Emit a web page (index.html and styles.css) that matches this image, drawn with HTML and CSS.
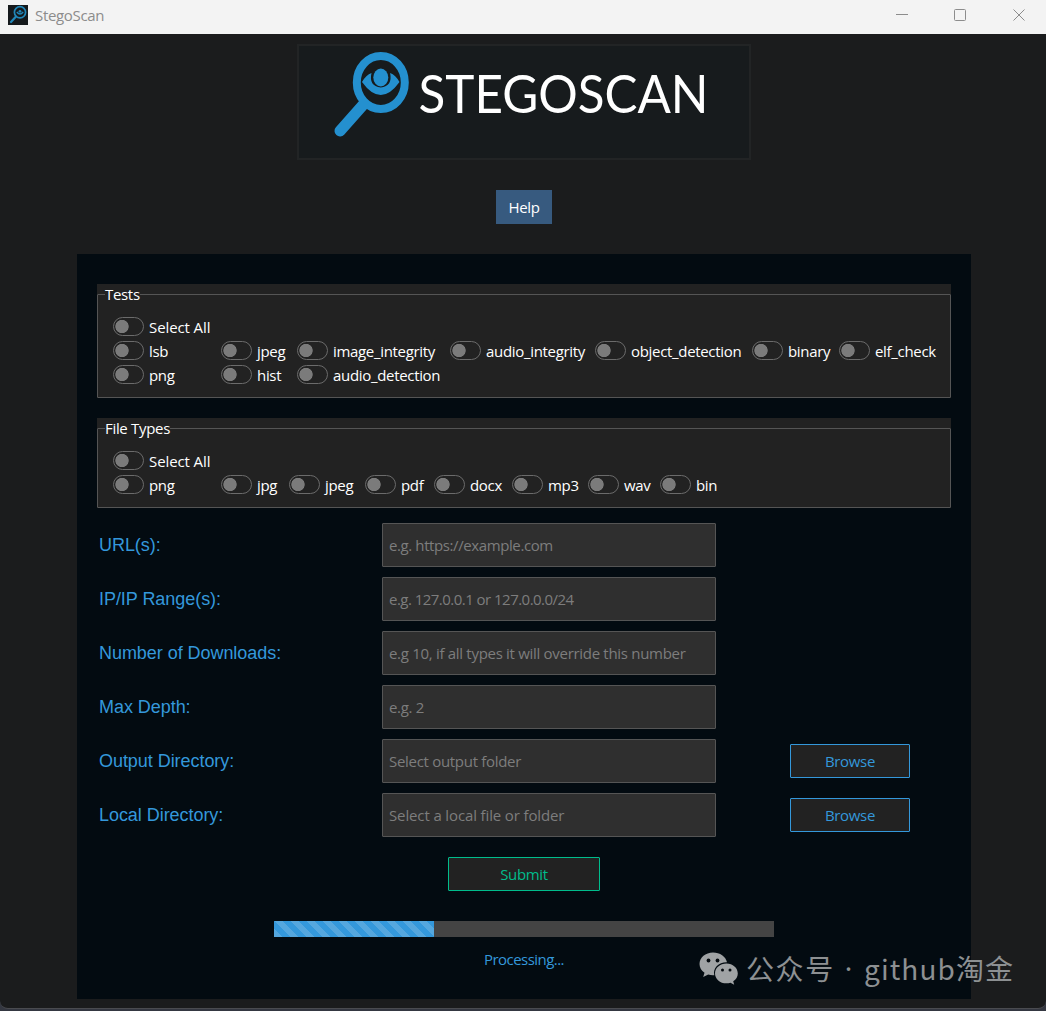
FILE: index.html
```html
<!DOCTYPE html>
<html lang="en">
<head>
    <meta charset="UTF-8">
    <meta name="viewport" content="width=device-width, initial-scale=1.0">
    <title>StegoScan</title>
    <link rel="stylesheet" href="styles.css">
</head>
<body>
    <div class="window">
        <header class="titlebar">
            <svg class="app-icon" width="20" height="20" viewBox="0 0 20 20">
                <rect width="20" height="20" fill="#15191c"/>
                <g fill="none" stroke="#2187b9">
                    <circle cx="12" cy="7.3" r="5.6" stroke-width="1.7"/>
                    <path d="M8 11.5 3 17" stroke-width="2.2" stroke-linecap="round"/>
                    <path d="M8.8 7q3.2 4 6.4 0" stroke-width="1.3"/>
                </g>
                <circle cx="12" cy="6.3" r="1.4" fill="#2187b9"/>
            </svg>
            <span class="app-name">StegoScan</span>
            <svg class="controls" width="130" height="14" viewBox="0 0 130 14" fill="none" stroke="#8c8c8c">
                <path d="M0 6.500h12"/>
                <rect x="58.500" y="1.500" width="11" height="11" rx="1"/>
                <path d="m117.500 1.500 11 11m0-11-11 11"/>
            </svg>
        </header>

        <main>
            <div class="logo">
                <svg width="450" height="112" viewBox="299 46 450 112">
                    <ellipse cx="380.800" cy="82.500" rx="24" ry="26.500" fill="none" stroke="#2490cf" stroke-width="8"/>
                    <path d="m363 105-23 26" stroke="#2490cf" stroke-width="11" stroke-linecap="round"/>
                    <path d="M362 82q4-7 9.500-9-3 13 9.300 14.500 12-1.500 9.300-14.500 5.500 2 9.400 9-18.700 26-37.500 0z" fill="#2490cf"/>
                    <ellipse cx="380.800" cy="77.500" rx="7.500" ry="9" fill="#2490cf"/>
                    <text class="logo-text" x="418.500" y="112.500" textLength="290" lengthAdjust="spacingAndGlyphs">STEGOSCAN</text>
                </svg>
            </div>

            <button class="help">Help</button>

            <div class="panel">
                <div class="frame">
                    <fieldset>
                        <legend>Tests</legend>
                        <div class="options tests">
                            <label class="toggle all"><i></i><span>Select All</span></label>
                            <label class="toggle"><i></i><span>lsb</span></label>
                            <label class="toggle"><i></i><span>jpeg</span></label>
                            <label class="toggle"><i></i><span>image_integrity</span></label>
                            <label class="toggle"><i></i><span>audio_integrity</span></label>
                            <label class="toggle"><i></i><span>object_detection</span></label>
                            <label class="toggle"><i></i><span>binary</span></label>
                            <label class="toggle"><i></i><span>elf_check</span></label>
                            <label class="toggle"><i></i><span>png</span></label>
                            <label class="toggle"><i></i><span>hist</span></label>
                            <label class="toggle"><i></i><span>audio_detection</span></label>
                        </div>
                    </fieldset>
                </div>

                <div class="frame">
                    <fieldset>
                        <legend>File Types</legend>
                        <div class="options types">
                            <label class="toggle all"><i></i><span>Select All</span></label>
                            <label class="toggle"><i></i><span>png</span></label>
                            <label class="toggle"><i></i><span>jpg</span></label>
                            <label class="toggle"><i></i><span>jpeg</span></label>
                            <label class="toggle"><i></i><span>pdf</span></label>
                            <label class="toggle"><i></i><span>docx</span></label>
                            <label class="toggle"><i></i><span>mp3</span></label>
                            <label class="toggle"><i></i><span>wav</span></label>
                            <label class="toggle"><i></i><span>bin</span></label>
                        </div>
                    </fieldset>
                </div>

                <form class="form">
                    <div class="row">
                        <label for="url">URL(s):</label>
                        <input type="text" id="url" class="url" placeholder="e.g. https://example.com">
                    </div>
                    <div class="row">
                        <label for="ip">IP/IP Range(s):</label>
                        <input type="text" id="ip" class="ip" placeholder="e.g. 127.0.0.1 or 127.0.0.0/24">
                    </div>
                    <div class="row">
                        <label for="downloads">Number of Downloads:</label>
                        <input type="text" id="downloads" placeholder="e.g 10, if all types it will override this number">
                    </div>
                    <div class="row">
                        <label for="depth">Max Depth:</label>
                        <input type="text" id="depth" placeholder="e.g. 2">
                    </div>
                    <div class="row">
                        <label for="output">Output Directory:</label>
                        <input type="text" id="output" placeholder="Select output folder">
                        <button type="button" class="browse">Browse</button>
                    </div>
                    <div class="row">
                        <label for="local">Local Directory:</label>
                        <input type="text" id="local" class="local" placeholder="Select a local file or folder">
                        <button type="button" class="browse">Browse</button>
                    </div>
                    <button type="button" class="submit">Submit</button>
                </form>

                <div class="progress"><div class="bar" style="width: 32%"></div></div>
                <div class="status">Processing...</div>
            </div>
        </main>
    </div>

    <div class="watermark">
        <svg width="40" height="33" viewBox="0 0 40 33">
            <path fill="#a0a3a5" d="M14 .5C6.500.5.500 5.500.500 12c0 3.600 1.900 6.700 5 8.800L4.200 25l5-2.500c1.500.4 3 .7 4.800.7h1.300C13.500 16 20 10 28 10.300 26.800 4.500 21 .5 14 .5z"/>
            <path fill="#a0a3a5" d="M27.500 11.500c-6.500 0-11.500 4.400-11.500 9.900s5 9.900 11.500 9.900c1.300 0 2.700-.2 4-.6l3.700 2-1-3.400c2.900-1.900 4.600-4.700 4.600-7.900 0-5.500-5-9.900-11.300-9.900z"/>
            <g fill="#050b10">
                <circle cx="9.500" cy="8.500" r="1.900"/>
                <circle cx="18.500" cy="8.500" r="1.900"/>
                <circle cx="23.500" cy="18" r="1.500"/>
                <circle cx="31" cy="18" r="1.500"/>
            </g>
        </svg>
        <span class="wm-label">公众号</span>
        <span class="wm-dot">·</span>
        <span class="wm-name">github淘金</span>
    </div>
</body>
</html>
```
FILE: styles.css
```css
body {
    margin: 0;
    height: 1011px;
    overflow: hidden;
    background-color: #343741;
    font-family: "Open Sans", "Noto Sans", sans-serif;
    font-size: 15px;
    letter-spacing: -0.32px;
    color: #ffffff;
}
.window {
    height: 1009px;
    box-sizing: border-box;
    background-color: #1b1c1d;
    border-bottom: 1px solid #4a4b50;
    border-radius: 0 0 8px 8px;
    overflow: hidden;
}
.titlebar {
    display: flex;
    align-items: center;
    height: 34px;
    box-sizing: border-box;
    padding: 0 20px 4px 8px;
    background-color: #f3f3f3;
    color: #8c8c8c;
}
.app-name {
    margin-left: 7px;
}
.controls {
    margin-left: auto;
}
main {
    display: flex;
    flex-direction: column;
    align-items: center;
    padding: 10px 0 0 2px;
}
.logo {
    width: 450px;
    height: 112px;
    border: 2px solid #222425;
    background-color: #171b1d;
    margin-right: 1px;
}
.logo svg {
    display: block;
}
.logo-text {
    font-family: Lato, sans-serif;
    font-size: 52px;
    letter-spacing: 0;
    fill: #ffffff;
}
button {
    padding: 0;
    font-family: inherit;
    font-size: 15px;
    letter-spacing: -0.32px;
    line-height: 20px;
    height: 34px;
    border-radius: 1px;
    box-sizing: border-box;
    background-color: #222222;
}
.help {
    width: 56px;
    margin: 30px 0;
    border: none;
    border-radius: 0;
    background-color: #375a7f;
    color: #ffffff;
}
.panel {
    width: 894px;
    height: 745px;
    box-sizing: border-box;
    padding: 30px 20px 0;
    background-color: #030b11;
}
.frame {
    margin-bottom: 20px;
    background-color: #222222;
}
fieldset {
    margin: 0;
    padding: 11px 7px 10px 7px;
    border: 1px solid #555555;
    border-radius: 1px;
}
legend {
    padding: 0;
    height: 20px;
    line-height: 21px;
}
.options {
    display: grid;
    grid-auto-rows: 24px;
    padding-left: 8px;
}
.tests {
    grid-template-columns: 108px 76px 153px 145px 157px 87px 97px;
}
.types {
    grid-template-columns: 108px 68px 76px 69px 78px 76px 72px 60px;
}
.toggle {
    display: flex;
    align-items: center;
    white-space: nowrap;
}
.toggle.all {
    grid-column: 1 / -1;
    letter-spacing: -0.1px;
}
.toggle i {
    width: 31px;
    height: 19px;
    margin: 0 5px 1px 0;
    box-sizing: border-box;
    border: 1px solid #6b6b6b;
    border-radius: 10px;
    background: radial-gradient(circle at 8px 8.5px, #7b7b7b 6.3px, transparent 7px);
}
.toggle span {
    line-height: 24px;
    padding-bottom: 1px;
}
.form {
    display: flex;
    flex-direction: column;
    gap: 10px;
    margin-top: -5px;
}
.row {
    display: grid;
    grid-template-columns: 283px 334px 120px;
    align-items: center;
    padding-left: 2px;
    height: 44px;
}
.row label {
    font-family: "Liberation Sans", Arial, sans-serif;
    font-size: 18px;
    letter-spacing: -0.05px;
    color: #3498db;
}
input {
    width: 334px;
    height: 44px;
    padding: 0 6px 1px;
    box-sizing: border-box;
    border: 1px solid #555555;
    border-radius: 1px;
    background-color: #2f2f2f;
    font-family: inherit;
    font-size: 15px;
    letter-spacing: -0.3px;
    color: #ffffff;
}
.url {
    letter-spacing: -0.4px;
}
.ip {
    letter-spacing: -0.53px;
}
.local {
    letter-spacing: -0.13px;
}
input::placeholder {
    color: #7d7d7d;
    opacity: 1;
}
.browse {
    margin-left: 74px;
    width: 120px;
    border: 1px solid #3498db;
    color: #3498db;
}
.submit {
    align-self: center;
    width: 152px;
    margin-top: 10px;
    border: 1px solid #00bc8c;
    color: #00bc8c;
}
.progress {
    width: 500px;
    height: 16px;
    margin: 30px auto 0;
    background-color: #444444;
}
.bar {
    height: 16px;
    background: repeating-linear-gradient(45deg, #55a7de 0 5.660px, #3498db 5.660px 11.314px);
}
.status {
    margin-top: 12px;
    text-align: center;
    line-height: 20px;
    letter-spacing: -0.55px;
    color: #3498db;
}
.watermark {
    position: absolute;
    left: 699px;
    top: 951px;
    display: flex;
    align-items: center;
    height: 34px;
    font-family: "Noto Sans CJK SC", sans-serif;
    font-size: 28px;
    line-height: 34px;
    letter-spacing: 1.1px;
    white-space: nowrap;
    color: #8d9092;
}
.wm-label {
    width: 88px;
    margin-left: 7px;
    letter-spacing: 1.6px;
}
.wm-dot {
    width: 30px;
    font-family: "Noto Sans", sans-serif;
    text-align: center;
}
```
